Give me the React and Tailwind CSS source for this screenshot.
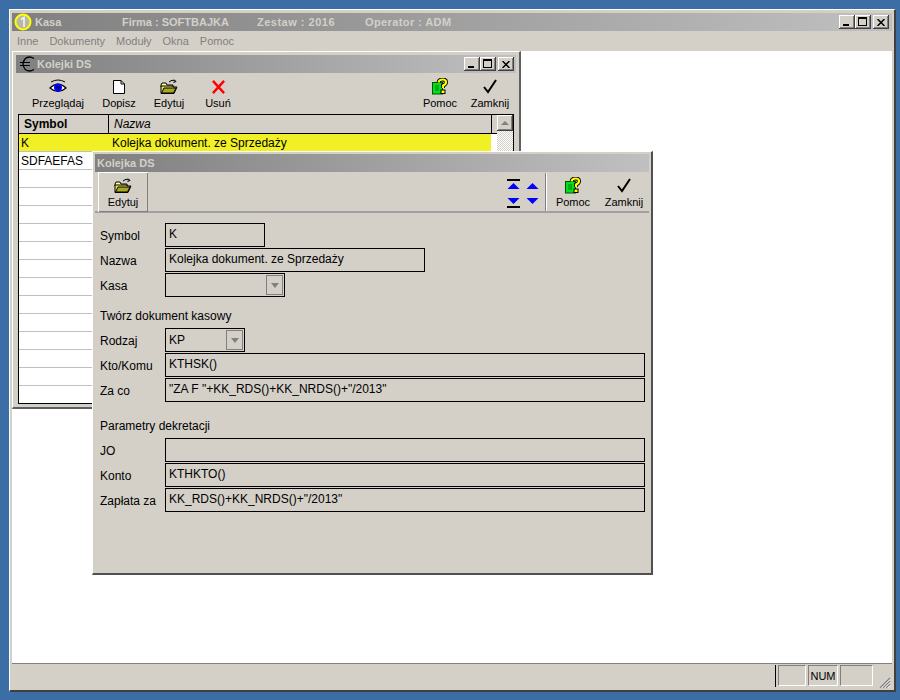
const raised = "shadow-[inset_-1px_-1px_0_#404040,inset_1px_1px_0_#ffffff,inset_-2px_-2px_0_#808080]";

const Arrow = ({ down, bar }) => (
    <svg width="13" height="12" viewBox="0 0 13 12" className="block">
        {down ? (
            <>
                <polygon points="0.5,1 12.5,1 6.5,7" fill="#0000ff" />
                {bar && <rect x="0" y="9" width="13" height="2" fill="#000" />}
            </>
        ) : (
            <>
                {bar && <rect x="0" y="0" width="13" height="2" fill="#000" />}
                <polygon points="6.5,4 12.5,10 0.5,10" fill="#0000ff" />
            </>
        )}
    </svg>
);

const EuroIcon = () => (
    <svg width="16" height="16" viewBox="0 0 16 16" className="ml-[3px] mr-[2px]">
        <path d="M15 2.5 Q12.5 1 10.5 1 Q5 1 4 8 Q5 15 10.5 15 Q12.5 15 15 13.5" fill="none" stroke="#000" strokeWidth="1.3" />
        <path d="M1 6.5 H11 M1 9.5 H11" stroke="#000" strokeWidth="1" />
    </svg>
);

const EyeIcon = () => (
    <svg width="18" height="16" viewBox="0 0 18 16">
        <path d="M2 3 Q9 -1 16 3" fill="none" stroke="#000" strokeWidth="1" />
        <path d="M1 9 Q9 1 17 9 Q9 16 1 9 Z" fill="#fff" stroke="#000" strokeWidth="1.2" />
        <circle cx="9" cy="8.5" r="4" fill="#0000ff" />
        <circle cx="9" cy="8.5" r="1.6" fill="#000060" />
    </svg>
);

const DocIcon = () => (
    <svg width="14" height="16" viewBox="0 0 14 16">
        <path d="M1.5 1.5 H9 L12.5 5 V14.5 H1.5 Z" fill="#fff" stroke="#000" />
        <path d="M9 1.5 V5 H12.5" fill="none" stroke="#000" />
    </svg>
);

const FolderIcon = () => (
    <svg width="18" height="16" viewBox="0 0 18 16">
        <path d="M9 3 Q12 0 15 2" fill="none" stroke="#000" />
        <path d="M14 0.5 L16 2.5 L13.5 3.5" fill="none" stroke="#000" />
        <path d="M1 6 L2 4 H6 L7 6 H13 V8 H1 Z" fill="#ffff99" stroke="#000" />
        <path d="M1 14.5 V7 H13 V8 H17 L14 14.5 Z" fill="#e8e860" stroke="#000" />
        <path d="M4 9 H16 L13.5 14 H1.5 Z" fill="#a8a820" stroke="#000" />
    </svg>
);

const XIcon = () => (
    <svg width="15" height="14" viewBox="0 0 16 15">
        <path d="M2 1 L14 14 M14 1 L2 14" stroke="#ff0000" strokeWidth="2.6" fill="none" />
    </svg>
);

const HelpIcon = () => (
    <svg width="16" height="17" viewBox="0 0 16 17">
        <rect x="0.5" y="4.5" width="10" height="11.5" fill="#00e020" stroke="#005000" />
        <path d="M3 8 H7 M3 10 H7 M3 12 H7" stroke="#008000" />
        <path d="M6.5 4.5 Q7 1.5 10.5 1.5 Q14 1.5 14 4 Q14 6.5 11 7.5 V10" fill="none" stroke="#000" strokeWidth="4" />
        <path d="M6.5 4.5 Q7 1.5 10.5 1.5 Q14 1.5 14 4 Q14 6.5 11 7.5 V10" fill="none" stroke="#ffff00" strokeWidth="2.2" />
        <rect x="9" y="12" width="4" height="3.5" fill="#ffff00" stroke="#000" />
    </svg>
);

const CheckIcon = () => (
    <svg width="14" height="15" viewBox="0 0 14 15">
        <path d="M1 8 L5 13 L13 1" fill="none" stroke="#000" strokeWidth="2" />
    </svg>
);

const ToolButton = ({ icon, label, w, pressed }) => (
    <div className={`flex flex-col items-center h-[40px] pt-[4px] shrink-0 ${pressed ? "shadow-[inset_1px_1px_0_#ffffff,inset_-1px_-1px_0_#808080]" : ""}`} style={{ width: w }}>
        <div className="h-[19px] flex items-center justify-center">{icon}</div>
        <span className="text-[11px] leading-[14px] text-[#000] whitespace-nowrap">{label}</span>
    </div>
);

const WinButtons = ({ main }) => (
    <div className={`flex items-center ${main ? "mr-[3px]" : "mr-[2px]"}`}>
        <div className={`w-[16px] h-[14px] bg-[#d4d0c8] ${raised} relative`}>
            <div className="absolute left-[4px] bottom-[3px] w-[6px] h-[2px] bg-black"></div>
        </div>
        <div className={`w-[16px] h-[14px] bg-[#d4d0c8] ${raised} relative`}>
            <div className="absolute left-[3px] top-[2px] w-[9px] h-[9px] border border-black border-t-2"></div>
        </div>
        <div className={`w-[16px] h-[14px] ml-[2px] bg-[#d4d0c8] ${raised} flex items-center justify-center`}>
            <svg width="8" height="7" viewBox="0 0 8 7"><path d="M0.5 0 L7.5 7 M7.5 0 L0.5 7" stroke="#000" strokeWidth="1.5" /></svg>
        </div>
    </div>
);

const TitleBar = ({ children, buttons, main }) => (
    <div className="h-[18px] flex items-center justify-between bg-gradient-to-r from-[#808080] to-[#c0c0c0]">
        <div className="flex items-center text-[#d4d0c8] font-bold text-[11px] whitespace-nowrap">{children}</div>
        {buttons && <WinButtons main={main} />}
    </div>
);

const Field = ({ w, children, combo, low }) => (
    <div className={`h-[24px] border border-black flex items-start justify-between pl-[3px] text-[12px] leading-[14px] relative ${low ? "pt-[4px]" : "pt-[3px]"}`} style={{ width: w }}>
        <span>{children}</span>
        {combo && (
            <div className="absolute right-[1px] top-[1px] w-[17px] h-[20px] border border-[#808080] flex items-center justify-center">
                <div className="w-0 h-0 border-x-[4px] border-x-transparent border-t-[5px] border-t-[#808080]"></div>
            </div>
        )}
    </div>
);

const FormRow = ({ label, w, value, combo, low }) => (
    <div className="flex items-center h-[24px] mb-[1px]">
        <span className="w-[65px] text-[12px] pt-[2px] shrink-0 whitespace-nowrap">{label}</span>
        <Field w={w} combo={combo} low={low}>{value}</Field>
    </div>
);

const ListRow = ({ a, b, selected }) => (
    <div className={`flex h-[18px] text-[12px] leading-[18px] border-b border-[#c0c0c0] ${selected ? "bg-[#f0f024]" : "bg-white"}`}>
        <span className="w-[90px] pl-[2px]">{a}</span>
        <span className="pl-[3px]">{b}</span>
    </div>
);

const MainWindow = () => (
    <div className="absolute left-[9px] top-[9px] w-[887px] h-[683px] bg-[#d4d0c8] border-l border-t border-[#ffffff] border-r-2 border-b-2 border-r-[#404040] border-b-[#404040] px-[2px] pt-[3px] flex flex-col">
        <TitleBar buttons main>
            <svg width="18" height="18" viewBox="0 0 18 18" className="ml-[2px] mr-[3px]">
                <circle cx="9" cy="9" r="7.5" fill="#b8b8a8" stroke="#ffff00" strokeWidth="2" />
                <path d="M7 6.5 L10 4.5 V14" stroke="#f4f4ec" strokeWidth="1.6" fill="none" />
            </svg>
            <span className="w-[87px]">Kasa</span>
            <span className="w-[135px]">Firma : SOFTBAJKA</span>
            <span className="w-[108px] tracking-[0.5px]">Zestaw : 2016</span>
            <span className="tracking-[0.4px]">Operator : ADM</span>
        </TitleBar>
        <div className="h-[20px] flex items-center gap-[11px] pl-[5px] text-[11px] text-[#808080]">
            <span>Inne</span>
            <span>Dokumenty</span>
            <span>Moduły</span>
            <span>Okna</span>
            <span>Pomoc</span>
        </div>
        <div className="flex-1 bg-white relative">
            <ListWindow />
            <DetailWindow />
        </div>
        <StatusBar />
    </div>
);

const ListWindow = () => (
    <div className="absolute left-0 top-0 w-[509px] h-[358px] bg-[#d4d0c8] border-t border-l border-[#ffffff] border-r-2 border-b-2 border-r-[#606060] border-b-[#606060] px-[3px] pt-[3px] flex flex-col">
        <TitleBar buttons>
            <EuroIcon />
            <span>Kolejki DS</span>
        </TitleBar>
        <div className="flex h-[40px] pl-[14px]">
            <ToolButton icon={<EyeIcon />} label="Przeglądaj" w={56} />
            <div className="w-[11px]"></div>
            <ToolButton icon={<DocIcon />} label="Dopisz" w={44} />
            <div className="w-[7px]"></div>
            <ToolButton icon={<FolderIcon />} label="Edytuj" w={42} />
            <div className="w-[8px]"></div>
            <ToolButton icon={<XIcon />} label="Usuń" w={40} />
            <div className="flex-1"></div>
            <ToolButton icon={<HelpIcon />} label="Pomoc" w={40} />
            <div className="w-[10px]"></div>
            <ToolButton icon={<CheckIcon />} label="Zamknij" w={40} />
            <div className="w-[6px]"></div>
        </div>
        <div className="ml-[2px] mr-[2px] mt-[1px] h-[290px] border border-black bg-white flex">
            <div className="w-[472px] flex flex-col">
                <div className="flex h-[19px] bg-[#d4d0c8] border-b border-black text-[12px] leading-[18px]">
                    <span className="w-[90px] pl-[5px] font-bold border-r border-black">Symbol</span>
                    <span className="pl-[5px] italic">Nazwa</span>
                </div>
                <ListRow a="K" b="Kolejka dokument. ze Sprzedaży" selected />
                <ListRow a="SDFAEFAS" />
                <ListRow />
                <ListRow />
                <ListRow />
                <ListRow />
                <ListRow />
                <ListRow />
                <ListRow />
                <ListRow />
                <ListRow />
                <ListRow />
                <ListRow />
                <ListRow />
            </div>
            <div className="flex-1 flex flex-col">
                <div className="h-[19px] border-b border-black border-l bg-[#d4d0c8]"></div>
            </div>
            <div className="w-[16px] bg-[repeating-conic-gradient(#ffffff_0_25%,#d4d0c8_0_50%)] bg-[length:2px_2px]">
                <div className={`h-[16px] bg-[#d4d0c8] ${raised} flex items-center justify-center`}>
                    <div className="w-0 h-0 border-x-[4px] border-x-transparent border-b-[4px] border-b-[#808080]"></div>
                </div>
            </div>
        </div>
    </div>
);

const DetailWindow = () => (
    <div className="absolute left-[80px] top-[100px] w-[561px] h-[424px] bg-[#d4d0c8] border-t border-l border-[#ffffff] border-r-2 border-b-2 border-r-[#505050] border-b-[#505050] px-[2px] pt-[2px] flex flex-col">
        <TitleBar>
            <span className="ml-[2px]">Kolejka DS</span>
        </TitleBar>
        <div className="flex h-[41px] border-b-2 border-b-[#a0a0a0] pl-[3px]">
            <ToolButton icon={<FolderIcon />} label="Edytuj" w={50} pressed />
            <div className="flex-1"></div>
            <div className="grid grid-cols-[13px_13px] gap-x-[6px] h-[30px] mt-[7px] content-between mr-[6px]">
                <Arrow bar />
                <Arrow />
                <Arrow down bar />
                <Arrow down />
            </div>
            <div className="w-[2px] h-[38px] mt-[1px] bg-[#808080] border-r border-white mr-[7px]"></div>
            <ToolButton icon={<HelpIcon />} label="Pomoc" w={38} />
            <div className="w-[10px]"></div>
            <ToolButton icon={<CheckIcon />} label="Zamknij" w={44} />
            <div className="w-[3px]"></div>
        </div>
        <div className="pl-[5px] pt-[10px] flex-1 flex flex-col">
            <FormRow label="Symbol" w={100} value="K" />
            <FormRow label="Nazwa" w={260} value="Kolejka dokument. ze Sprzedaży" />
            <FormRow label="Kasa" w={120} combo />
            <div className="h-[30px] pt-[11px] text-[12px] leading-[14px]">Twórz dokument kasowy</div>
            <FormRow label="Rodzaj" w={80} value="KP" combo low />
            <FormRow label="Kto/Komu" w={480} value="KTHSK()" />
            <FormRow label="Za co" w={480} value={'"ZA F "+KK_RDS()+KK_NRDS()+"/2013"'} />
            <div className="h-[35px] pt-[16px] text-[12px] leading-[14px]">Parametry dekretacji</div>
            <FormRow label="JO" w={480} />
            <FormRow label="Konto" w={480} value="KTHKTO()" />
            <FormRow label="Zapłata za" w={480} value={'KK_RDS()+KK_NRDS()+"/2013"'} />
        </div>
    </div>
);

const StatusBar = () => (
    <div className="h-[27px] border-t border-[#808080] bg-[#d4d0c8] flex items-start pt-[1px] relative">
        <div className="ml-[763px] w-[1px] h-[22px] bg-black"></div>
        <div className="ml-[2px] w-[28px] h-[21px] border border-[#ffffff] border-t-[#808080] border-l-[#808080]"></div>
        <div className="ml-[2px] w-[30px] h-[21px] border border-[#ffffff] border-t-[#808080] border-l-[#808080] text-[11px] leading-[20px] text-center">NUM</div>
        <div className="ml-[2px] w-[33px] h-[21px] border border-[#ffffff] border-t-[#808080] border-l-[#808080]"></div>
        <svg width="12" height="12" viewBox="0 0 12 12" className="absolute right-[1px] bottom-[1px]">
            <path d="M11 1 L1 11 M11 4 L4 11 M11 7 L7 11" stroke="#808080" strokeWidth="1.4" />
            <path d="M11 2.5 L2.5 11 M11 5.5 L5.5 11 M11 8.5 L8.5 11" stroke="#ffffff" strokeWidth="0.8" />
        </svg>
    </div>
);

export default function App() {
    return (
        <div className="relative w-[900px] h-[700px] overflow-hidden bg-[#3a6ea5] text-black [font-family:Liberation_Sans,Arial,sans-serif]">
            <MainWindow />
        </div>
    );
}
